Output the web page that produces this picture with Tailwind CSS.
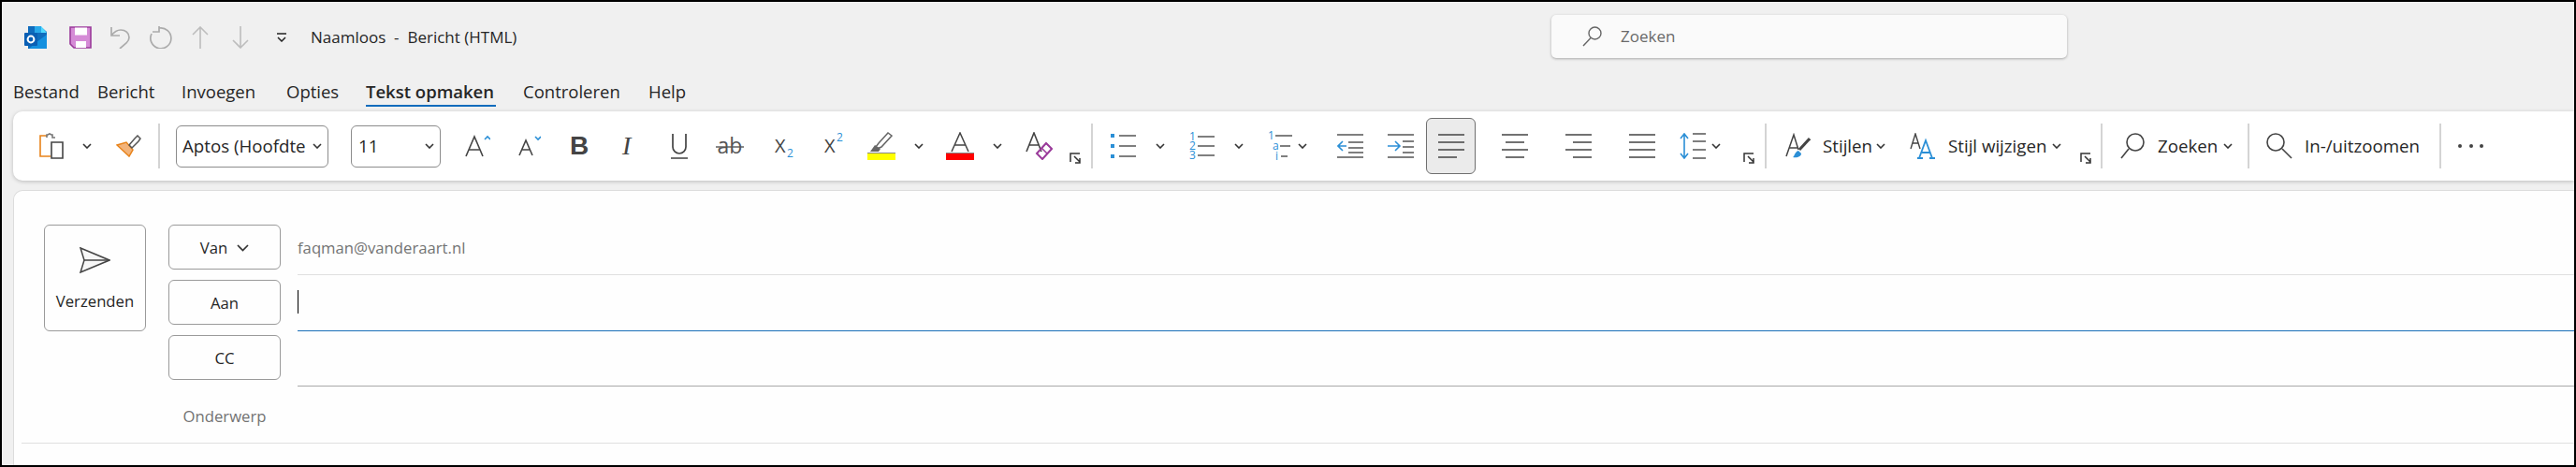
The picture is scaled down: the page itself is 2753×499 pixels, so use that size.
<!DOCTYPE html>
<html lang="nl">
<head>
    <meta charset="UTF-8">
    <title>Naamloos - Bericht (HTML)</title>
    <script src="https://cdn.jsdelivr.net/npm/@tailwindcss/browser@4"></script>
</head>
<body class="bg-black">
<div class="h-[499px] w-full overflow-hidden border-2 border-black bg-[#f0f0f0] font-['Open_Sans',sans-serif] text-[#262626]">

    <!-- title bar -->
    <div class="flex h-[74px] items-center">
        <svg class="ml-[24px] mt-[2px] h-[24px] w-[24px] shrink-0" viewBox="0 0 24 24">
            <path d="M4 0h13l7 6v16a2 2 0 0 1-2 2H4z" fill="#0f6cbd"/>
            <path d="M11 0h7v7h-7z" fill="#28a8ea"/>
            <path d="M18 0l6 7h-6z" fill="#50d9ff"/>
            <path d="M13 17l11-8v15H5z" fill="#1490df"/>
            <rect x="0" y="7" width="14" height="14" rx="1" fill="#0a5fb4"/>
            <circle cx="7" cy="14" r="3.4" fill="none" stroke="#fff" stroke-width="2"/>
        </svg>
        <svg class="ml-[24px] mt-[2px] h-[24px] w-[24px] shrink-0" viewBox="0 0 24 24">
            <path d="M1 1h22v22H5l-4-4z" fill="#d58bd6" stroke="#9a3a9a" stroke-width="1.6"/>
            <rect x="6" y="1.5" width="13" height="8" fill="#fff"/>
            <rect x="7" y="16" width="11" height="7" fill="#fff"/>
        </svg>
        <svg class="ml-[20px] mt-[2px] h-[24px] w-[22px] shrink-0" viewBox="0 0 22 24" fill="none" stroke="#ababab" stroke-width="1.7">
            <path d="M1 1v9h9M1 10c3-4 6-6 10-6 5 0 9 3 9 8 0 3-2 5-3 6l-7 6"/>
        </svg>
        <svg class="ml-[20px] mt-[2px] h-[24px] w-[24px] shrink-0" viewBox="0 0 24 24" fill="none" stroke="#ababab" stroke-width="1.7">
            <path d="M10 0v6H3M10 2A11 11 0 1 1 2 8"/>
        </svg>
        <svg class="ml-[21px] mt-[2px] h-[24px] w-[18px] shrink-0" viewBox="0 0 18 24" fill="none" stroke="#bdbdbd" stroke-width="1.6">
            <path d="M9 24V1M1 9l8-8 8 8"/>
        </svg>
        <svg class="ml-[25px] mt-[2px] h-[24px] w-[18px] shrink-0" viewBox="0 0 18 24" fill="none" stroke="#bdbdbd" stroke-width="1.6">
            <path d="M9 0v23M1 15l8 8 8-8"/>
        </svg>
        <svg class="ml-[30px] mt-[2px] h-[10px] w-[10px] shrink-0" viewBox="0 0 10 10" fill="none" stroke="#222" stroke-width="1.5">
            <path d="M0 1h10M1 5l4 4 4-4"/>
        </svg>
        <span class="ml-[26px] mt-[2px] w-[220px] shrink-0 whitespace-pre text-[17px]">Naamloos  -  Bericht (HTML)</span>
        <div class="ml-[1106px] flex h-[46px] w-[551px] shrink-0 items-center rounded-[5px] bg-[#fafafa] shadow-[0_1px_3px_rgba(0,0,0,0.3)]">
            <svg class="ml-[33px] h-[22px] w-[21px] shrink-0" viewBox="0 0 21 22" fill="none" stroke="#666" stroke-width="1.4">
                <circle cx="13.5" cy="7.5" r="6.5"/><path d="M9 12.5L1 21"/>
            </svg>
            <span class="ml-[20px] text-[17px] text-[#6a6a6a]">Zoeken</span>
        </div>
    </div>

    <!-- tabs -->
    <div class="flex h-[38px] items-start pt-[10px] text-[18.5px] leading-[24px]">
        <span class="ml-[12px] w-[90px]">Bestand</span>
        <span class="w-[90px]">Bericht</span>
        <span class="w-[112px]">Invoegen</span>
        <span class="w-[85px]">Opties</span>
        <span class="w-[168px]"><span class="inline-block h-[28px] w-[139px] whitespace-nowrap border-b-2 border-[#0f6cbd] font-semibold">Tekst opmaken</span></span>
        <span class="w-[134px]">Controleren</span>
        <span>Help</span>
    </div>

    <!-- ribbon -->
    <div class="ml-[12px] mt-[5px] flex h-[74px] items-center rounded-l-[10px] bg-white text-[18.7px] shadow-[0_1px_4px_rgba(0,0,0,0.22)]">
        <svg class="ml-[28px] h-[28px] w-[27px] shrink-0" viewBox="0 0 27 28" fill="none" stroke-width="1.6">
            <path d="M8 3H1v22h11" stroke="#e8831a"/>
            <path d="M8 5V2h1l2-1 2 1h1v3h3" stroke="#777"/>
            <path d="M13 10h12v17H13z" stroke="#444"/>
        </svg>
        <svg class="ml-[19px] h-[6px] w-[10px] shrink-0" viewBox="0 0 10 6" fill="none" stroke="#333" stroke-width="1.6"><path d="M1 1l4 4 4-4"/></svg>
        <svg class="ml-[26px] h-[24px] w-[27px] shrink-0" viewBox="0 0 27 24" stroke-width="1.5">
            <path d="M1 11l10-3 7 8-4 7z" fill="#f2b37a" stroke="#e8831a"/>
            <path d="M14 11l6-7 3-3 3 3-2 3-7 7z" fill="#fff" stroke="#555"/>
        </svg>
        <div class="ml-[18px] h-[48px] w-[2px] shrink-0 bg-[#d4d4d4]"></div>

        <div class="ml-[17px] flex h-[45px] w-[163px] shrink-0 items-center justify-between rounded-[6px] border border-[#8c8c8c] pl-[6px] pr-[6px]">
            <span class="whitespace-nowrap">Aptos (Hoofdte</span>
            <svg class="h-[6px] w-[10px] shrink-0" viewBox="0 0 10 6" fill="none" stroke="#333" stroke-width="1.6"><path d="M1 1l4 4 4-4"/></svg>
        </div>
        <div class="ml-[24px] flex h-[45px] w-[96px] shrink-0 items-center justify-between rounded-[6px] border border-[#8c8c8c] pl-[7px] pr-[6px]">
            <span>11</span>
            <svg class="h-[6px] w-[10px] shrink-0" viewBox="0 0 10 6" fill="none" stroke="#333" stroke-width="1.6"><path d="M1 1l4 4 4-4"/></svg>
        </div>

        <svg class="ml-[26px] h-[24px] w-[27px] shrink-0" viewBox="0 0 27 24" fill="none" stroke-width="1.6">
            <path d="M1 23L10 2l9 21M4 16h12" stroke="#444"/><path d="M21 5l3-3 3 3" stroke="#2b8fd6"/>
        </svg>
        <svg class="ml-[30px] h-[22px] w-[24px] shrink-0" viewBox="0 0 24 22" fill="none" stroke-width="1.6">
            <path d="M1 21l7-16 7 16M3.5 15h9" stroke="#444"/><path d="M18 1l3 3 3-3" stroke="#2b8fd6"/>
        </svg>
        <span class="ml-[31px] w-[17px] shrink-0 font-['Liberation_Sans',sans-serif] text-[28px] font-bold leading-none text-[#444]">B</span>
        <span class="ml-[39px] w-[14px] shrink-0 font-['Liberation_Serif',serif] text-[28px] italic leading-none text-[#444]">I</span>
        <svg class="ml-[38px] h-[28px] w-[18px] shrink-0" viewBox="0 0 18 28" fill="none" stroke="#444" stroke-width="1.7">
            <path d="M2 1v14a7 7 0 0 0 14 0V1"/><path d="M0 27h18" stroke="#555"/>
        </svg>
        <svg class="ml-[30px] h-[24px] w-[30px] shrink-0 overflow-visible" viewBox="0 0 30 24" fill="none">
            <text x="15" y="20" text-anchor="middle" font-family="'Open Sans',sans-serif" font-size="23" fill="#555">ab</text>
            <path d="M0 13h30" stroke="#555" stroke-width="1.4"/>
        </svg>
        <svg class="ml-[33px] h-[28px] w-[20px] shrink-0 overflow-visible" viewBox="0 0 20 28">
            <text x="0" y="21" font-family="'Open Sans',sans-serif" font-size="20" fill="#444">X</text>
            <text x="13" y="26" font-family="'Open Sans',sans-serif" font-size="12" fill="#2b8fd6">2</text>
        </svg>
        <svg class="ml-[33px] h-[28px] w-[20px] shrink-0 overflow-visible" viewBox="0 0 20 28">
            <text x="0" y="21" font-family="'Open Sans',sans-serif" font-size="20" fill="#444">X</text>
            <text x="13" y="9" font-family="'Open Sans',sans-serif" font-size="12" fill="#2b8fd6">2</text>
        </svg>
        <div class="ml-[26px] flex w-[30px] shrink-0 flex-col">
            <svg class="h-[22px] w-[30px]" viewBox="0 0 30 22" stroke-width="1.5">
                <path d="M9 16l3-4L22 1l4 3L15 16l-5 2z" fill="#fff" stroke="#666"/><path d="M3 21l5-7 6 4-2 3z" fill="#666"/>
            </svg>
            <div class="h-[1px] w-full bg-[#888]"></div>
            <div class="h-[7px] w-full bg-[#ffff00]"></div>
        </div>
        <svg class="ml-[20px] h-[6px] w-[10px] shrink-0" viewBox="0 0 10 6" fill="none" stroke="#333" stroke-width="1.6"><path d="M1 1l4 4 4-4"/></svg>
        <div class="ml-[24px] flex w-[30px] shrink-0 flex-col">
            <svg class="h-[22px] w-[30px]" viewBox="0 0 30 22" fill="none" stroke="#444" stroke-width="1.5"><path d="M6 21L15 1l9 20M9 14h12"/></svg>
            <div class="h-[1px] w-full bg-[#888]"></div>
            <div class="h-[7px] w-full bg-[#ff0000]"></div>
        </div>
        <svg class="ml-[20px] h-[6px] w-[10px] shrink-0" viewBox="0 0 10 6" fill="none" stroke="#333" stroke-width="1.6"><path d="M1 1l4 4 4-4"/></svg>
        <svg class="ml-[25px] h-[30px] w-[29px] shrink-0" viewBox="0 0 29 30" fill="none" stroke-width="1.6">
            <path d="M1 21L9 1l8 20M4 14h10" stroke="#444"/>
            <path d="M12 23l10-11 6 6-10 11z" stroke="#9a3a9a" stroke-width="2"/><path d="M17 17l6 6" stroke="#9a3a9a"/>
        </svg>
        <svg class="ml-[18px] mt-[26px] h-[12px] w-[12px] shrink-0" viewBox="0 0 12 12" fill="none" stroke="#333" stroke-width="1.5"><path d="M1 10V1h10M5 4l6 6M11 6v5H6"/></svg>
        <div class="ml-[11px] h-[48px] w-[2px] shrink-0 bg-[#d4d4d4]"></div>

        <svg class="ml-[18px] h-[28px] w-[28px] shrink-0" viewBox="0 0 28 28" fill="none" stroke="#555" stroke-width="1.6">
            <path d="M10 3h18M10 14h18M10 25h18"/><path d="M1 1h4v4H1zM1 12h4v4H1zM1 23h4v4H1z" fill="#2b8fd6" stroke="none"/>
        </svg>
        <svg class="ml-[21px] h-[6px] w-[10px] shrink-0" viewBox="0 0 10 6" fill="none" stroke="#333" stroke-width="1.6"><path d="M1 1l4 4 4-4"/></svg>
        <svg class="ml-[25px] h-[32px] w-[28px] shrink-0 overflow-visible" viewBox="0 0 28 32" fill="none">
            <path d="M10 6h18M10 16h18M10 26h18" stroke="#555" stroke-width="1.6"/>
            <g font-family="'Open Sans',sans-serif" font-size="12" fill="#2b8fd6">
                <text x="1" y="10">1</text><text x="1" y="20">2</text><text x="1" y="30">3</text>
            </g>
        </svg>
        <svg class="ml-[21px] h-[6px] w-[10px] shrink-0" viewBox="0 0 10 6" fill="none" stroke="#333" stroke-width="1.6"><path d="M1 1l4 4 4-4"/></svg>
        <svg class="ml-[25px] h-[32px] w-[28px] shrink-0 overflow-visible" viewBox="0 0 28 32" fill="none">
            <path d="M9 5h18M14 16h11M15 27h7" stroke="#555" stroke-width="1.6"/>
            <g font-family="'Open Sans',sans-serif" font-size="12" fill="#2b8fd6">
                <text x="1" y="9">1</text><text x="6" y="20">a</text><text x="9" y="31">i</text>
            </g>
        </svg>
        <svg class="ml-[5px] h-[6px] w-[10px] shrink-0" viewBox="0 0 10 6" fill="none" stroke="#333" stroke-width="1.6"><path d="M1 1l4 4 4-4"/></svg>

        <svg class="ml-[32px] h-[26px] w-[28px] shrink-0" viewBox="0 0 28 26" fill="none" stroke="#555" stroke-width="1.6">
            <path d="M0 1h28M12 9h16M12 15h16M0 25h28M12 20h16"/><path d="M10 13H1M6 8l-5 5 5 5" stroke="#2b8fd6"/>
        </svg>
        <svg class="ml-[26px] h-[26px] w-[28px] shrink-0" viewBox="0 0 28 26" fill="none" stroke="#555" stroke-width="1.6">
            <path d="M0 1h28M16 8h12M16 14h12M16 20h12M0 25h28"/><path d="M0 13h12M8 8l5 5-5 5" stroke="#2b8fd6"/>
        </svg>
        <div class="ml-[13px] flex h-[60px] w-[53px] shrink-0 items-center justify-center rounded-[6px] border border-[#6f6f6f] bg-[#ebebeb]">
            <svg class="h-[26px] w-[28px]" viewBox="0 0 28 26" fill="none" stroke="#444" stroke-width="1.7"><path d="M0 1h28M0 9h28M0 17h28M0 25h20"/></svg>
        </div>
        <svg class="ml-[28px] h-[26px] w-[28px] shrink-0" viewBox="0 0 28 26" fill="none" stroke="#444" stroke-width="1.7"><path d="M0 1h28M4 9h20M0 17h28M4 25h20"/></svg>
        <svg class="ml-[40px] h-[26px] w-[28px] shrink-0" viewBox="0 0 28 26" fill="none" stroke="#444" stroke-width="1.7"><path d="M0 1h28M8 9h20M0 17h28M8 25h20"/></svg>
        <svg class="ml-[40px] h-[26px] w-[28px] shrink-0" viewBox="0 0 28 26" fill="none" stroke="#444" stroke-width="1.7"><path d="M0 1h28M0 9h28M0 17h28M0 25h28"/></svg>
        <svg class="ml-[26px] h-[28px] w-[28px] shrink-0" viewBox="0 0 28 28" fill="none" stroke="#555" stroke-width="1.6">
            <path d="M14 1h14M14 9h14M14 18h14M14 27h14"/><path d="M5 1v26M1 6l4-5 4 5M1 22l4 5 4-5" stroke="#2b8fd6"/>
        </svg>
        <svg class="ml-[6px] h-[6px] w-[10px] shrink-0" viewBox="0 0 10 6" fill="none" stroke="#333" stroke-width="1.6"><path d="M1 1l4 4 4-4"/></svg>
        <svg class="ml-[24px] mt-[26px] h-[12px] w-[12px] shrink-0" viewBox="0 0 12 12" fill="none" stroke="#333" stroke-width="1.5"><path d="M1 10V1h10M5 4l6 6M11 6v5H6"/></svg>
        <div class="ml-[11px] h-[48px] w-[2px] shrink-0 bg-[#d4d4d4]"></div>

        <svg class="ml-[20px] h-[28px] w-[27px] shrink-0" viewBox="0 0 27 28" fill="none" stroke-width="1.5">
            <path d="M1 25L9 2l5 16M4 16h9" stroke="#444"/>
            <path d="M26 6L15 18" stroke="#444" stroke-width="3"/><path d="M8 26c2-1 2-6 6-7l3 3c0 3-4 5-9 4z" fill="#2b8fd6"/>
        </svg>
        <span class="ml-[13px] w-[52px] shrink-0">Stijlen</span>
        <svg class="ml-[5px] h-[6px] w-[10px] shrink-0" viewBox="0 0 10 6" fill="none" stroke="#333" stroke-width="1.6"><path d="M1 1l4 4 4-4"/></svg>
        <svg class="ml-[26px] h-[28px] w-[27px] shrink-0" viewBox="0 0 27 28" fill="none">
            <path d="M1 17L6 1l5 16M3 11h6" stroke="#444" stroke-width="1.4"/>
            <path d="M10 27L17 8l7 19M13 21h9M8 27h6M21 27h6" stroke="#2b8fd6" stroke-width="1.8"/>
        </svg>
        <span class="ml-[14px] w-[107px] shrink-0 whitespace-nowrap">Stijl wijzigen</span>
        <svg class="ml-[4px] h-[6px] w-[10px] shrink-0" viewBox="0 0 10 6" fill="none" stroke="#333" stroke-width="1.6"><path d="M1 1l4 4 4-4"/></svg>
        <svg class="ml-[20px] mt-[26px] h-[12px] w-[12px] shrink-0" viewBox="0 0 12 12" fill="none" stroke="#333" stroke-width="1.5"><path d="M1 10V1h10M5 4l6 6M11 6v5H6"/></svg>
        <div class="ml-[10px] h-[48px] w-[2px] shrink-0 bg-[#d4d4d4]"></div>

        <svg class="ml-[19px] h-[28px] w-[26px] shrink-0" viewBox="0 0 26 28" fill="none" stroke="#444" stroke-width="1.6">
            <circle cx="16" cy="10" r="9"/><path d="M9 17L1 27"/>
        </svg>
        <span class="ml-[14px] w-[64px] shrink-0">Zoeken</span>
        <svg class="ml-[6px] h-[6px] w-[10px] shrink-0" viewBox="0 0 10 6" fill="none" stroke="#333" stroke-width="1.6"><path d="M1 1l4 4 4-4"/></svg>
        <div class="ml-[16px] h-[48px] w-[2px] shrink-0 bg-[#d4d4d4]"></div>
        <svg class="ml-[17px] h-[28px] w-[29px] shrink-0" viewBox="0 0 29 28" fill="none" stroke="#444" stroke-width="1.6">
            <circle cx="11" cy="10" r="9"/><path d="M18 17l10 10"/>
        </svg>
        <span class="ml-[13px] w-[125px] shrink-0 whitespace-nowrap">In-/uitzoomen</span>
        <div class="ml-[19px] h-[48px] w-[2px] shrink-0 bg-[#d4d4d4]"></div>
        <div class="ml-[18px] flex w-[27px] shrink-0 justify-between">
            <div class="h-[4px] w-[4px] rounded-full bg-[#444]"></div>
            <div class="h-[4px] w-[4px] rounded-full bg-[#444]"></div>
            <div class="h-[4px] w-[4px] rounded-full bg-[#444]"></div>
        </div>
    </div>

    <!-- compose card -->
    <div class="ml-[12px] mt-[10px] h-[300px] rounded-tl-[10px] border-l border-t border-[#dcdcdc] bg-[#fefefe] text-[#262626]">
        <div class="ml-[8px] flex h-[270px] border-b border-[#e0e0e0] pl-[24px] pt-[36px] text-[16.7px]">
            <div class="flex h-[114px] w-[109px] shrink-0 flex-col items-center rounded-[6px] border border-[#9a9a9a]">
                <svg class="mt-[23px] h-[28px] w-[33px]" viewBox="0 0 33 28" fill="none" stroke="#444" stroke-width="1.5">
                    <path d="M1 1l31 13L1 27l4-13z" fill="#f7f7f7"/><path d="M5 14h27"/>
                </svg>
                <span class="mt-[17px]">Verzenden</span>
            </div>
            <div class="ml-[24px] flex-1">
                <div class="flex h-[59px] items-start">
                    <div class="flex h-[48px] w-[120px] shrink-0 items-center justify-center gap-[10px] rounded-[6px] border border-[#9a9a9a] pt-[2px]">
                        <span>Van</span>
                        <svg class="h-[8px] w-[13px]" viewBox="0 0 13 8" fill="none" stroke="#333" stroke-width="1.7"><path d="M1 1l5.500 5.500L12 1"/></svg>
                    </div>
                    <div class="ml-[18px] flex h-[54px] flex-1 items-start border-b border-[#e0e0e0] pt-[12px] text-[#737373]">faqman@vanderaart.nl</div>
                </div>
                <div class="flex h-[59px] items-start">
                    <div class="flex h-[48px] w-[120px] shrink-0 items-center justify-center rounded-[6px] border border-[#9a9a9a] pt-[2px]">Aan</div>
                    <div class="ml-[18px] flex h-[55px] flex-1 items-start border-b border-[#1a6fb8] pt-[11px]">
                        <div class="h-[25px] w-[1px] bg-black"></div>
                    </div>
                </div>
                <div class="flex h-[58px] items-start">
                    <div class="flex h-[48px] w-[120px] shrink-0 items-center justify-center rounded-[6px] border border-[#9a9a9a] pt-[2px]">CC</div>
                    <div class="ml-[18px] h-[55px] flex-1 border-b border-[#a8a8a8]"></div>
                </div>
                <div class="flex h-[57px] w-[120px] items-center justify-center text-[#737373]">Onderwerp</div>
            </div>
        </div>
    </div>
</div>
</body>
</html>
